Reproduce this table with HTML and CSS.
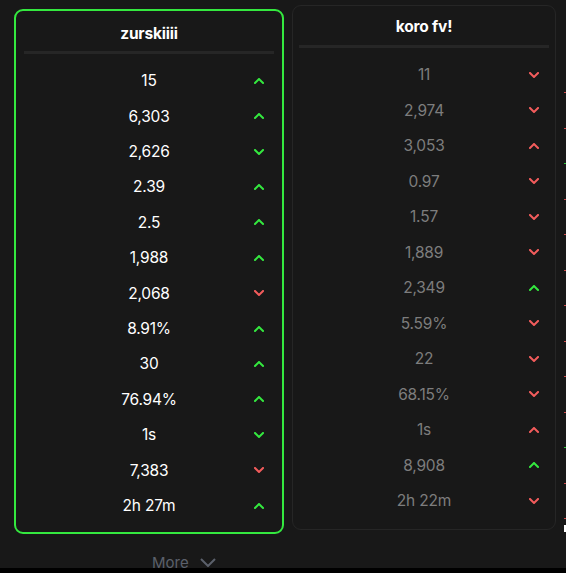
FILE: index.html
```html
<!DOCTYPE html>
<html>
<head>
<meta charset="utf-8">
<link rel="stylesheet" href="styles.css">
</head>
<body>
<div class="page">
  <div class="cols">
    <div class="card card--sel">
      <div class="card-title">zurskiiii</div>
      <div class="divider"></div>
      <div class="rows">
        <div class="row"><span class="val">15</span><span class="ar up"><svg viewBox="0 0 10 6"><path d="M1 5L5 1L9 5"/></svg></span></div>
        <div class="row"><span class="val">6,303</span><span class="ar up"><svg viewBox="0 0 10 6"><path d="M1 5L5 1L9 5"/></svg></span></div>
        <div class="row"><span class="val">2,626</span><span class="ar dn g"><svg viewBox="0 0 10 6"><path d="M1 1L5 5L9 1"/></svg></span></div>
        <div class="row"><span class="val">2.39</span><span class="ar up"><svg viewBox="0 0 10 6"><path d="M1 5L5 1L9 5"/></svg></span></div>
        <div class="row"><span class="val">2.5</span><span class="ar up"><svg viewBox="0 0 10 6"><path d="M1 5L5 1L9 5"/></svg></span></div>
        <div class="row"><span class="val">1,988</span><span class="ar up"><svg viewBox="0 0 10 6"><path d="M1 5L5 1L9 5"/></svg></span></div>
        <div class="row"><span class="val">2,068</span><span class="ar dn"><svg viewBox="0 0 10 6"><path d="M1 1L5 5L9 1"/></svg></span></div>
        <div class="row"><span class="val">8.91%</span><span class="ar up"><svg viewBox="0 0 10 6"><path d="M1 5L5 1L9 5"/></svg></span></div>
        <div class="row"><span class="val">30</span><span class="ar up"><svg viewBox="0 0 10 6"><path d="M1 5L5 1L9 5"/></svg></span></div>
        <div class="row"><span class="val">76.94%</span><span class="ar up"><svg viewBox="0 0 10 6"><path d="M1 5L5 1L9 5"/></svg></span></div>
        <div class="row"><span class="val">1s</span><span class="ar dn g"><svg viewBox="0 0 10 6"><path d="M1 1L5 5L9 1"/></svg></span></div>
        <div class="row"><span class="val">7,383</span><span class="ar dn"><svg viewBox="0 0 10 6"><path d="M1 1L5 5L9 1"/></svg></span></div>
        <div class="row"><span class="val">2h 27m</span><span class="ar up"><svg viewBox="0 0 10 6"><path d="M1 5L5 1L9 5"/></svg></span></div>
      </div>
    </div>
    <div class="card card--other">
      <div class="card-title">koro fv!</div>
      <div class="divider"></div>
      <div class="rows">
        <div class="row"><span class="val">11</span><span class="ar dn"><svg viewBox="0 0 10 6"><path d="M1 1L5 5L9 1"/></svg></span></div>
        <div class="row"><span class="val">2,974</span><span class="ar dn"><svg viewBox="0 0 10 6"><path d="M1 1L5 5L9 1"/></svg></span></div>
        <div class="row"><span class="val">3,053</span><span class="ar up r"><svg viewBox="0 0 10 6"><path d="M1 5L5 1L9 5"/></svg></span></div>
        <div class="row"><span class="val">0.97</span><span class="ar dn"><svg viewBox="0 0 10 6"><path d="M1 1L5 5L9 1"/></svg></span></div>
        <div class="row"><span class="val">1.57</span><span class="ar dn"><svg viewBox="0 0 10 6"><path d="M1 1L5 5L9 1"/></svg></span></div>
        <div class="row"><span class="val">1,889</span><span class="ar dn"><svg viewBox="0 0 10 6"><path d="M1 1L5 5L9 1"/></svg></span></div>
        <div class="row"><span class="val">2,349</span><span class="ar up"><svg viewBox="0 0 10 6"><path d="M1 5L5 1L9 5"/></svg></span></div>
        <div class="row"><span class="val">5.59%</span><span class="ar dn"><svg viewBox="0 0 10 6"><path d="M1 1L5 5L9 1"/></svg></span></div>
        <div class="row"><span class="val">22</span><span class="ar dn"><svg viewBox="0 0 10 6"><path d="M1 1L5 5L9 1"/></svg></span></div>
        <div class="row"><span class="val">68.15%</span><span class="ar dn"><svg viewBox="0 0 10 6"><path d="M1 1L5 5L9 1"/></svg></span></div>
        <div class="row"><span class="val">1s</span><span class="ar up r"><svg viewBox="0 0 10 6"><path d="M1 5L5 1L9 5"/></svg></span></div>
        <div class="row"><span class="val">8,908</span><span class="ar up"><svg viewBox="0 0 10 6"><path d="M1 5L5 1L9 5"/></svg></span></div>
        <div class="row"><span class="val">2h 22m</span><span class="ar dn"><svg viewBox="0 0 10 6"><path d="M1 1L5 5L9 1"/></svg></span></div>
      </div>
    </div>
    <div class="edge">
      <span class="tick red"></span><span class="tick red"></span><span class="tick green"></span>
      <span class="tick red"></span><span class="tick red"></span><span class="tick red"></span>
      <span class="tick red"></span><span class="tick red"></span><span class="tick red"></span>
      <span class="tick red"></span><span class="tick green"></span><span class="tick red"></span>
      <span class="tick red"></span>
      <span class="corner"></span>
    </div>
  </div>
  <div class="more">More <svg class="more-ic" viewBox="0 0 16 9"><path d="M1 1L8 8L15 1"/></svg></div>
</div>
</body>
</html>
```

FILE: styles.css
```css
html, body {
  margin: 0;
  padding: 0;
  background: #000;
}
body {
  width: 566px;
  height: 573px;
  overflow: hidden;
  font-family: Inter, "Noto Sans", sans-serif;
}
.page {
  background: #181818;
  height: 568px;
  overflow: hidden;
  position: relative;
}
.cols {
  display: flex;
  align-items: flex-start;
  padding-left: 14px;
}
.card {
  box-sizing: border-box;
  flex-shrink: 0;
  height: 525px;
  border-radius: 9px;
  background: #181818;
}
.card--sel {
  width: 270px;
  margin-top: 9px;
  border: 2px solid #34e83f;
}
.card--other {
  width: 264px;
  margin-top: 5px;
  margin-left: 8px;
  border: 1px solid #262626;
}
.card-title {
  color: #fff;
  font-weight: 700;
  font-size: 15.5px;
  text-align: center;
  letter-spacing: -0.2px;
}
.card--sel .card-title {
  height: 20px;
  line-height: 20px;
  margin-top: 13px;
}
.card--other .card-title {
  height: 20px;
  line-height: 20px;
  margin-top: 11px;
}
.divider {
  height: 3px;
  background: #262626;
}
.card--sel .divider {
  margin: 7px 8px 0 8px;
}
.card--other .divider {
  margin: 8px 6px 0 6px;
}
.rows {
  display: flex;
  flex-direction: column;
}
.card--sel .rows { margin-top: 9px; }
.card--other .rows { margin-top: 9px; }
.row {
  height: 35.42px;
  display: grid;
  grid-template-columns: 1fr auto 1fr;
  align-items: center;
  font-size: 15.5px;
}
.card--other .row { height: 35.5px; }
.val {
  grid-column: 2;
  text-align: center;
  letter-spacing: -0.2px;
}
.card--sel .val { color: #fff; }
.card--other .val { color: #7d7d7d; }
.ar {
  grid-column: 3;
  justify-self: end;
  display: flex;
  align-items: center;
}
.card--sel .ar { padding-right: 18px; }
.card--other .ar { padding-right: 16px; }
.ar svg {
  width: 10px;
  height: 6px;
  fill: none;
  stroke-width: 2;
  stroke-linecap: square;
  stroke-linejoin: miter;
}
.ar.up svg { stroke: #34e83f; }
.ar.dn svg { stroke: #f25c5c; }
.ar.dn.g svg { stroke: #34e83f; }
.ar.up.r svg { stroke: #f25c5c; }
.edge {
  flex-shrink: 0;
  margin-left: 8px;
  padding-top: 92px;
  display: flex;
  flex-direction: column;
  gap: 34.5px;
}
.tick {
  display: block;
  width: 3px;
  height: 1px;
}
.tick.red { background: #c94a4a; }
.tick.green { background: #2ec43a; }
.corner {
  display: block;
  width: 4px;
  height: 5px;
  margin-top: -29px;
  border-top: 2px solid #fff;
  border-left: 2px solid #fff;
}
.more {
  position: absolute;
  left: 152px;
  top: 553px;
  color: #5b606b;
  font-size: 15px;
  display: flex;
  align-items: center;
  gap: 11px;
}
.more-ic {
  width: 16px;
  height: 9px;
  fill: none;
  stroke: #5b606b;
  stroke-width: 2;
}
```
